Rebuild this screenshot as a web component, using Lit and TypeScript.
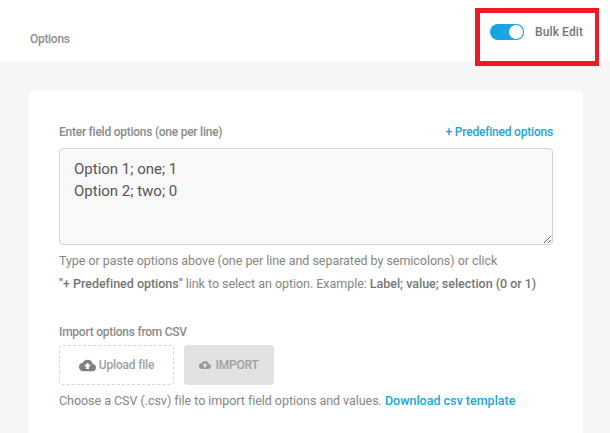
import { LitElement, html, css } from "lit";
import { customElement } from "lit/decorators.js";

const cloud = "M19.35 10.04A7.49 7.49 0 0 0 12 4C9.11 4 6.6 5.64 5.35 8.04A5.994 5.994 0 0 0 0 14c0 3.31 2.69 6 6 6h13c2.76 0 5-2.24 5-5 0-2.64-2.05-4.78-4.65-4.96zM14 13v4h-4v-4H7l5-5 5 5h-3z";

@customElement("app-root")
export class AppRoot extends LitElement {
  static styles = css`
    :host { display: block; width: 610px; height: 433px; overflow: hidden; position: relative; background: #f6f6f6; font-family: Roboto, "Liberation Sans", sans-serif; color: #777; }
    * { box-sizing: border-box; }
    .header { height: 61px; background: #fff; display: flex; align-items: center; justify-content: space-between; padding: 16px 27px 0 30px; }
    .title { font-size: 12px; font-weight: 500; color: #8f8f8f; letter-spacing: -0.3px; }
    .bulk { display: flex; align-items: center; gap: 11px; font-size: 12px; font-weight: 500; color: #757575; margin-top: -14px; letter-spacing: 0.1px; }
    .toggle { width: 34px; height: 16px; border-radius: 8px; background: #18a5e0; position: relative; }
    .knob { position: absolute; right: 0; top: 0; width: 16px; height: 16px; border-radius: 50%; background: #fff; border: 1px solid #18a5e0; }
    .highlight { position: absolute; left: 475px; top: 8px; width: 124px; height: 58px; border: 5px solid #ed1c24; border-right-width: 4px; pointer-events: none; }
    .body { padding: 30px 27px 0 29px; }
    .card { background: #fff; border-radius: 4px; height: 360px; padding: 33px 30px 0; }
    .row { display: flex; justify-content: space-between; align-items: center; font-size: 12px; line-height: 16px; font-weight: 500; color: #8a8a8a; letter-spacing: -0.25px; }
    .row .link { letter-spacing: -0.2px; }
    .link { color: #18a5e0; font-weight: 500; }
    textarea { display: block; width: 100%; height: 97px; margin: 8px 0 0; padding: 9px 14px; background: #f9f9f9; border: 1px solid #d4d4d4; border-radius: 4px; font: 400 15px/22px Roboto, sans-serif; color: #555; outline: none; }
    .help { font-size: 12.5px; line-height: 23px; color: #858585; margin-top: 4px; letter-spacing: -0.04px; }
    .help b { font-weight: 500; color: #757575; letter-spacing: -0.02px; }
    .import-label { margin-top: 29px; }
    .actions { display: flex; gap: 10px; margin-top: 5px; }
    .upload, .import { height: 40px; display: flex; align-items: center; justify-content: center; border-radius: 4px; font-size: 12px; font-weight: 500; color: #a0a0a0; letter-spacing: -0.2px; }
    .upload { width: 115px; border: 1px dashed #d6d6d6; gap: 3px; }
    .import { width: 90px; background: #e2e2e2; gap: 4px; }
    .upload svg { width: 17px; height: 17px; fill: #808080; }
    .import svg { width: 12px; height: 12px; fill: #9a9a9a; }
    .help2 { margin-top: 4px; }
    .help2 .link { font-size: 12.5px; letter-spacing: 0; }
  `;

  render() {
    return html`
      <div class="header">
        <span class="title">Options</span>
        <span class="bulk"><span class="toggle"><span class="knob"></span></span>Bulk Edit</span>
      </div>
      <div class="body">
        <div class="card">
          <div class="row"><span>Enter field options (one per line)</span><span class="link">+ Predefined options</span></div>
          <textarea .value=${"Option 1; one; 1\nOption 2; two; 0"}></textarea>
          <div class="help">Type or paste options above (one per line and separated by semicolons) or click<br /><b>"+ Predefined options"</b> link to select an option. Example: <b>Label; value; selection (0 or 1)</b></div>
          <div class="row import-label"><span>Import options from CSV</span></div>
          <div class="actions">
            <div class="upload"><svg viewBox="0 0 24 24"><path d=${cloud}></path></svg>Upload file</div>
            <div class="import"><svg viewBox="0 0 24 24"><path d=${cloud}></path></svg>IMPORT</div>
          </div>
          <div class="help help2">Choose a CSV (.csv) file to import field options and values. <span class="link">Download csv template</span></div>
        </div>
      </div>
      <div class="highlight"></div>
    `;
  }
}
